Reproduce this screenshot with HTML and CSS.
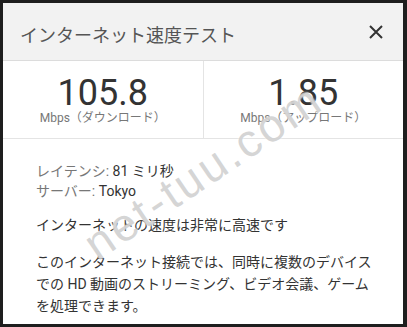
FILE: index.html
```html
<!DOCTYPE html>
<html lang="ja">
<head>
    <meta charset="UTF-8">
    <meta name="viewport" content="width=device-width, initial-scale=1.0">
    <title>インターネット速度テスト</title>
    <link rel="stylesheet" href="styles.css">
</head>
<body>
    <div class="speed-card">
        <div class="card-header">
            <h1>インターネット速度テスト</h1>
            <button class="close-btn" aria-label="閉じる">
                <svg width="14" height="14" viewBox="0 0 14 14">
                    <path d="M1 1 L13 13 M13 1 L1 13" stroke="#333" stroke-width="2" fill="none"/>
                </svg>
            </button>
        </div>

        <div class="stats">
            <div class="stat">
                <div class="stat-value">105.8</div>
                <div class="stat-label">Mbps（ダウンロード）</div>
            </div>
            <div class="stat">
                <div class="stat-value">1.85</div>
                <div class="stat-label">Mbps（アップロード）</div>
            </div>
        </div>

        <div class="details">
            <div class="info-row"><span class="info-label">レイテンシ:</span> 81 ミリ秒</div>
            <div class="info-row"><span class="info-label">サーバー:</span> Tokyo</div>

            <p class="summary">インターネットの速度は非常に高速です</p>

            <p class="description">このインターネット接続では、同時に複数のデバイス<br>での HD 動画のストリーミング、ビデオ会議、ゲーム<br>を処理できます。</p>

            <!-- 透かし -->
            <div class="watermark">net-tuu.com</div>
        </div>
    </div>
</body>
</html>
```

FILE: styles.css
```css
* {
    margin: 0;
    padding: 0;
    box-sizing: border-box;
    font-family: Roboto, "Noto Sans CJK JP", sans-serif;
}

body {
    background-color: #1e1e1e;
    width: 407px;
    height: 327px;
    padding: 3px 4px 3px 3px;
    overflow: hidden;
}

.speed-card {
    background: white;
    width: 400px;
    height: 321px;
    display: flex;
    flex-direction: column;
    position: relative;
    overflow: hidden;
}

.card-header {
    flex-shrink: 0;
    background-color: #f2f2f2;
    height: 58px;
    border-bottom: 1px solid #dcdcdc;
    display: flex;
    align-items: center;
    justify-content: space-between;
    padding: 5px 20px 0 17px;
}

h1 {
    color: #555;
    font-size: 18px;
    font-weight: 400;
}

.close-btn {
    background: none;
    border: none;
    width: 14px;
    height: 14px;
    display: flex;
    cursor: pointer;
    margin-top: -4px;
}

.stats {
    flex-shrink: 0;
    display: flex;
    height: 78px;
    border-bottom: 1px solid #e4e4e4;
}

.stat {
    flex: 1;
    display: flex;
    flex-direction: column;
    align-items: center;
    padding-top: 17px;
}

.stat:first-child {
    border-right: 1px solid #e4e4e4;
}

.stat-value {
    color: #333;
    font-size: 36px;
    line-height: 30px;
}

.stat-label {
    color: #777;
    font-size: 12px;
    line-height: 14px;
    margin-top: 3px;
}

.details {
    padding: 22px 20px 0 33px;
    font-size: 14px;
    color: #333;
    position: relative;
    flex: 1;
}

.info-row {
    line-height: 20px;
}

.info-label {
    color: #777;
}

.summary {
    line-height: 20px;
    margin-top: 14px;
}

.description {
    line-height: 22px;
    margin-top: 16px;
}

.watermark {
    position: absolute;
    left: 200px;
    top: 32px;
    transform: translate(-50%, -50%) rotate(-34deg);
    font-family: "Liberation Sans", sans-serif;
    font-size: 46px;
    letter-spacing: 3px;
    color: rgba(185, 185, 185, 0.6);
    text-shadow: 0 0 2px #fff;
    white-space: nowrap;
    pointer-events: none;
}
```
